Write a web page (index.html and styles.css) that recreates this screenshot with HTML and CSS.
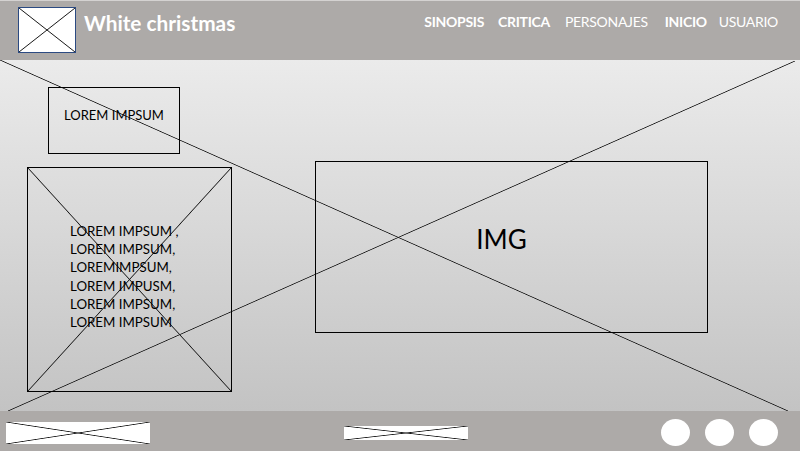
FILE: index.html
```html
<!DOCTYPE html>
<html lang="es">
<head>
    <meta charset="UTF-8">
    <meta name="viewport" content="width=device-width, initial-scale=1.0">
    <title>White christmas</title>
    <link rel="stylesheet" href="styles.css">
</head>
<body>
    <header class="topbar">
        <div class="logo placeholder"></div>
        <h1 class="title">White christmas</h1>
        <nav class="menu">
            <a href="#" class="strong">SINOPSIS</a>
            <a href="#" class="strong">CRITICA</a>
            <a href="#">PERSONAJES</a>
            <a href="#" class="strong">INICIO</a>
            <a href="#">USUARIO</a>
        </nav>
    </header>

    <main class="content">
        <div class="left-col">
            <div class="box small-box">LOREM IMPSUM</div>
            <div class="box text-box placeholder-lines">
                <p>
                    LOREM IMPSUM ,<br>
                    LOREM IMPSUM,<br>
                    LOREMIMPSUM,<br>
                    LOREM IMPUSM,<br>
                    LOREM IMPSUM,<br>
                    LOREM IMPSUM
                </p>
            </div>
        </div>
        <div class="box img-box">IMG</div>
    </main>

    <footer class="bottombar">
        <div class="foot-img wide placeholder"></div>
        <div class="foot-img mid placeholder"></div>
        <div class="circles">
            <span class="circle"></span>
            <span class="circle"></span>
            <span class="circle"></span>
        </div>
    </footer>
</body>
</html>
```
FILE: styles.css
```css
body {
    margin: 0;
    font-family: Lato, "DejaVu Sans", sans-serif;
    width: 800px;
    height: 451px;
    overflow: hidden;
}
.placeholder {
    background-color: #ffffff;
    background-image:
        linear-gradient(to top right, transparent calc(50% - 0.8px), #1a1a1a, transparent calc(50% + 0.8px)),
        linear-gradient(to bottom right, transparent calc(50% - 0.8px), #1a1a1a, transparent calc(50% + 0.8px));
}
.placeholder-lines {
    background-image:
        linear-gradient(to top right, transparent calc(50% - 0.8px), #1a1a1a, transparent calc(50% + 0.8px)),
        linear-gradient(to bottom right, transparent calc(50% - 0.8px), #1a1a1a, transparent calc(50% + 0.8px));
}

/* header */
.topbar {
    height: 60px;
    box-sizing: border-box;
    background: #adaaa8;
    border-top: 1px solid #d4d2d1;
    display: flex;
    align-items: flex-start;
    padding: 6px 22px 0 18px;
}
.logo {
    width: 58px;
    height: 46px;
    box-sizing: border-box;
    border: 1px solid #2b4a82;
}
.title {
    margin: 3px 0 0 8px;
    font-size: 20.8px;
    font-weight: bold;
    color: #ffffff;
}
.menu {
    margin-left: auto;
    display: flex;
    padding-top: 6px;
}
.menu a {
    color: #ffffff;
    text-decoration: none;
    font-size: 14px;
    letter-spacing: -0.3px;
    margin-left: 14px;
}
.menu a:nth-child(3) {
    margin-left: 15px;
}
.menu a:nth-child(4) {
    margin-left: 17px;
}
.menu a:nth-child(5) {
    margin-left: 12px;
}
.menu a.strong {
    font-weight: bold;
}

/* main */
.content {
    height: 351px;
    display: flex;
    align-items: flex-start;
    background:
        linear-gradient(to top right, transparent calc(50% - 0.8px), #1a1a1a, transparent calc(50% + 0.8px)) 0 0 / 788px 351px no-repeat,
        linear-gradient(to bottom right, transparent calc(50% - 0.8px), #1a1a1a, transparent calc(50% + 0.8px)) 8px 1px / 787px 350px no-repeat,
        linear-gradient(#ebebeb, #c3c3c3);
}
.left-col {
    display: flex;
    flex-direction: column;
    align-items: flex-start;
    padding: 27px 0 0 27px;
}
.box {
    box-sizing: border-box;
    border: 1px solid #000000;
    color: #000000;
}
.small-box {
    margin-left: 21px;
    width: 132px;
    height: 67px;
    font-size: 13px;
    text-align: center;
    padding-top: 19px;
}
.text-box {
    margin-top: 13px;
    width: 205px;
    height: 225px;
}
.text-box p {
    margin: 54px 0 0 42px;
    font-size: 13.3px;
    line-height: 18.2px;
}
.img-box {
    margin: 101px 0 0 83px;
    width: 393px;
    height: 172px;
    display: flex;
    align-items: center;
    justify-content: center;
    font-size: 26px;
    padding: 0 20px 17px 0;
}

/* footer */
.bottombar {
    height: 40px;
    background: #adaaa8;
    display: flex;
    align-items: center;
    padding: 0 22px 0 6px;
}
.foot-img.wide {
    width: 144px;
    height: 22px;
    margin-top: 3px;
}
.foot-img.mid {
    width: 124px;
    height: 14px;
    margin-left: 194px;
    margin-top: 3px;
}
.circles {
    margin-left: auto;
    display: flex;
    gap: 15px;
    margin-top: 3px;
}
.circle {
    width: 29px;
    height: 27px;
    border-radius: 50%;
    background: #ffffff;
}
```
